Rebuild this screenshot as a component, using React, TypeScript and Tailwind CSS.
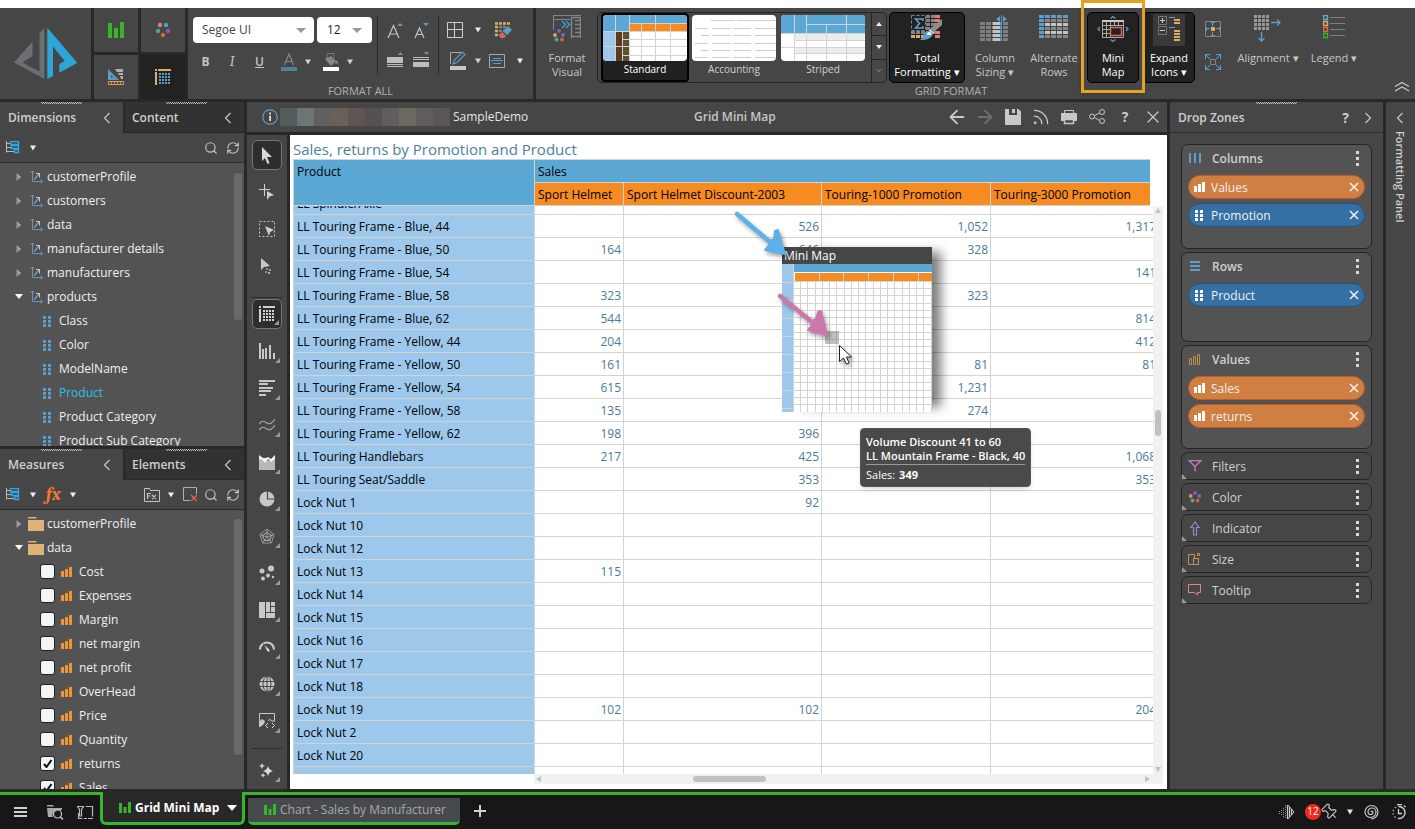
import type { ReactNode } from "react";
import { ArrowLeft, ArrowRight, Pin, RefreshCw, Rss, Search, X } from "lucide-react";

interface IconProps {
  w?: number;
  h?: number;
  children: ReactNode;
}

function Icon({ w = 16, h = 16, children }: IconProps) {
  return (
    <svg width={w} height={h} viewBox={`0 0 ${w} ${h}`} fill="none" className="block shrink-0" aria-hidden="true">
      {children}
    </svg>
  );
}

/* ---------- shared glyphs ---------- */

function Caret({ color = "#d0d0d0" }: { color?: string }) {
  return (
    <Icon w={6} h={6}>
      <path d="M0 0.5h6L3 5.5z" fill={color} />
    </Icon>
  );
}

function ChevronLeft() {
  return (
    <Icon w={8} h={12}>
      <path d="M6.5 1L1.5 6l5 5" stroke="#c8c8c8" strokeWidth="1.2" />
    </Icon>
  );
}

function ChevronRight() {
  return (
    <Icon w={8} h={12}>
      <path d="M1.5 1l5 5-5 5" stroke="#c8c8c8" strokeWidth="1.2" />
    </Icon>
  );
}

function Grip() {
  return (
    <span className="absolute top-0 left-[41px]">
      <Icon w={41} h={2}>
        <path d="M0 0.5h41" stroke="#c4c4c4" strokeDasharray="1 1" />
        <path d="M1 1.5h40" stroke="#c4c4c4" strokeDasharray="1 1" />
      </Icon>
    </span>
  );
}

function BarsIcon({ color }: { color: string }) {
  return (
    <Icon w={11} h={10}>
      <path d="M0 4h3v6H0zM4 2h3v8H4zM8 0h3v10H8z" fill={color} />
    </Icon>
  );
}

function DotsIcon({ color }: { color: string }) {
  return (
    <Icon w={8} h={11}>
      <path d="M0 0h3v3H0zM5 0h3v3H5zM0 4h3v3H0zM5 4h3v3H5zM0 8h3v3H0zM5 8h3v3H5z" fill={color} />
    </Icon>
  );
}

function TreeMenuIcon() {
  return (
    <Icon w={14} h={13}>
      <path d="M0.5 0v11.5M0.5 2.5h4M0.5 6.5h5M0.5 10.5h8" stroke="#b8b8b8" />
      <path d="M4.5 0.5h8v3h-8zM5.5 4.5h7v3h-7zM8.5 8.5h4v3h-4z" stroke="#2fa4e7" strokeWidth="1.4" />
    </Icon>
  );
}

function AxisIcon() {
  return (
    <Icon w={14} h={14}>
      <path d="M2.5 1v10.5h10M0.5 3L2.5 1l2 2M10.5 9.5l2 2-2 2" stroke="#5b9bc8" />
      <path d="M4 9.5L9.5 3.5M6 3.5h3.5v4" stroke="#c8c8c8" />
    </Icon>
  );
}

function GreenChart() {
  return (
    <Icon w={12} h={12}>
      <path d="M0 1h3v10H0zM4.5 5h3v6h-3zM9 0h3v11H9z" fill="#35b729" />
    </Icon>
  );
}

/* ---------- ribbon ---------- */

function Logo() {
  return (
    <Icon w={64} h={53}>
      <path d="M30.3 0.7V52L0 35.6l18.5-21V29L8.5 35.6l17 9V6z" fill="#6d6e71" />
      <path d="M33.3 0.7l30 35-18 10V37l5.500-3L39 19.500V49l-5.700 3z" fill="#2ba6d8" />
    </Icon>
  );
}

function ModeIcons() {
  const cell = "flex items-center justify-center bg-[#464646]";
  return (
    <div className="grid w-[91px] shrink-0 grid-cols-2 grid-rows-2 gap-[3px]">
      <button type="button" aria-label="Discover" className={cell}>
        <Icon>
          <path d="M0 1h4v15H0zM6 6h4v10H6zM12 0h4v16h-4z" fill="#35b729" />
        </Icon>
      </button>
      <button type="button" aria-label="Present" className={cell}>
        <Icon>
          <circle cx="5" cy="3" r="2.2" fill="#e27d6f" />
          <circle cx="11" cy="3" r="2.2" fill="#5b9bc8" />
          <circle cx="3" cy="9" r="2.2" fill="#4fa59a" />
          <circle cx="13" cy="9" r="2.2" fill="#9255b5" />
          <circle cx="8" cy="13" r="2.2" fill="#cf6a2c" />
        </Icon>
      </button>
      <button type="button" aria-label="Illustrate" className={cell}>
        <Icon>
          <path d="M0 0v11h11zM3 6v2.500h2.500z" fill="#5b9bc8" fillRule="evenodd" />
          <path d="M7 0h8v3H9zM10 4h5v2h-4zM12 7h3v3h-2z" fill="#b0b0b0" />
          <path d="M0.500 12.500h15v3H0.500zM3.500 12.500v2M6.500 12.500v2M9.500 12.500v2M12.500 12.500v2" stroke="#d6a256" />
        </Icon>
      </button>
      <button type="button" aria-label="Grid" className="flex items-center justify-center bg-[#222222]">
        <Icon>
          <path d="M0 0h2v2H0zM3 0h13v2H3zM0 3h2v13H0z" fill="#deab6b" />
          <path d="M5 4v12M8 4v12M11 4v12M14 4v12" stroke="#5f9ecb" strokeWidth="2" strokeDasharray="2 1" />
        </Icon>
      </button>
    </div>
  );
}

function FormatAll() {
  return (
    <section className="flex w-[345px] shrink-0 flex-col bg-[#464646] pt-2">
      <div className="flex h-[59px] pl-[5px]">
        <div className="w-[184px]">
          <div className="flex gap-[3px]">
            <div className="relative">
              <select aria-label="Font" className="h-[26px] w-[121px] appearance-none rounded-[4px] bg-white pl-[9px] text-xs text-[#444]">
                <option>Segoe UI</option>
              </select>
              <span className="pointer-events-none absolute top-[12px] right-2">
                <Icon w={10} h={5}>
                  <path d="M0 0h10L5 5z" fill="#999" />
                </Icon>
              </span>
            </div>
            <div className="relative">
              <select aria-label="Font size" className="h-[26px] w-[55px] appearance-none rounded-[4px] bg-white pl-[10px] text-xs text-[#222]">
                <option>12</option>
              </select>
              <span className="pointer-events-none absolute top-[12px] right-[10px]">
                <Icon w={10} h={5}>
                  <path d="M0 0h10L5 5z" fill="#999" />
                </Icon>
              </span>
            </div>
          </div>
          <div className="mt-[9px] flex h-5 items-center text-xs text-[#c4c4c4]">
            <button type="button" className="w-[25px] font-bold">B</button>
            <button type="button" className="w-[28px] font-serif text-sm italic">I</button>
            <button type="button" className="w-[27px] font-semibold underline">U</button>
            <button type="button" aria-label="Font colour" className="flex w-[32px] justify-center">
              <Icon h={18}>
                <path d="M3.500 12L8 1l4.500 11M5 8.500h6" stroke="#858585" strokeWidth="1.200" />
                <path d="M0 14h16v4H0z" fill="#51819b" />
              </Icon>
            </button>
            <button type="button" aria-label="Font colours" className="w-[10px]"><Caret /></button>
            <button type="button" aria-label="Fill" className="flex w-[32px] justify-center">
              <Icon h={18}>
                <path d="M2 6l6-3 5 5-5 5z" fill="#8a8a8a" />
                <path d="M4 5V0.500h7V5M4 4l7 3" stroke="#777" />
                <path d="M13.500 7l1.800 3.500h-3.600z" fill="#5b9bc8" />
                <path d="M0 14h16v4H0z" fill="#fff" />
              </Icon>
            </button>
            <button type="button" aria-label="Fill colours"><Caret /></button>
          </div>
        </div>

        <div className="grid w-[61px] grid-cols-2 grid-rows-2 place-items-center border-l border-[#2b2b2b] px-1">
          <button type="button" aria-label="Larger text">
            <Icon w={16} h={18}>
              <path d="M1 16L6.500 3.500 12 16M3 12h7" stroke="#c4c4c4" strokeWidth="1.200" />
              <path d="M10 4h6l-3-3z" fill="#5b9bc8" />
            </Icon>
          </button>
          <button type="button" aria-label="Smaller text">
            <Icon w={16} h={18}>
              <path d="M2 16L6.500 6 11 16M4 12.500h5" stroke="#c4c4c4" strokeWidth="1.200" />
              <path d="M10 1h6l-3 3z" fill="#5b9bc8" />
            </Icon>
          </button>
          <button type="button" aria-label="Taller rows">
            <Icon w={16} h={18}>
              <path d="M11 4h5l-2.500-3z" fill="#5b9bc8" />
              <path d="M0 6h16v6H0zM0 13h16v1H0zM0 15h16v1H0z" fill="#bdbdbd" />
            </Icon>
          </button>
          <button type="button" aria-label="Shorter rows">
            <Icon w={16} h={18}>
              <path d="M11 1h5l-2.500 3z" fill="#5b9bc8" />
              <path d="M0 6h16v1H0zM0 8h16v1H0zM0 11h16v5H0z" fill="#bdbdbd" />
            </Icon>
          </button>
        </div>

        <div className="border-l border-[#2b2b2b] pl-2">
          <div className="flex h-[27px] items-center">
            <button type="button" aria-label="Borders">
              <Icon w={16} h={16}>
                <path d="M0.500 0.500h15v15H0.500zM7.500 0.500v15M0.500 7.500h15" stroke="#d0d0d0" />
              </Icon>
            </button>
            <button type="button" aria-label="Border styles" className="ml-[12px]"><Caret color="#e8e8e8" /></button>
            <button type="button" aria-label="Clear format" className="ml-[14px]">
              <Icon w={17} h={16}>
                <path d="M0 1.500h16M0 5h4M0 9h4M0 13h4" stroke="#deab6b" strokeWidth="2.400" strokeDasharray="3 1" />
                <path d="M4 5h8M4 9h5M4 13h3" stroke="#808080" strokeWidth="2.400" strokeDasharray="3 1" />
                <path d="M8 9l5-5 4 4-5 5z" fill="#5f9ecb" />
                <path d="M7 10l4 4-2 2H5v-3z" fill="#dc6850" />
              </Icon>
            </button>
          </div>
          <div className="mt-[3px] flex h-[29px] items-center">
            <button type="button" aria-label="Border colour" className="ml-[3px]">
              <Icon w={17} h={20}>
                <path d="M0.500 13V1.500H11" stroke="#a8a8a8" />
                <path d="M3 13l1.500-4 8-8 2.500 2.500-8 8z" stroke="#5b9bc8" strokeWidth="1.200" />
                <path d="M0 15h16v4H0z" fill="#c8c8c8" />
              </Icon>
            </button>
            <button type="button" aria-label="Border colours" className="ml-[8px]"><Caret /></button>
            <button type="button" aria-label="Text wrap" className="ml-[8px]">
              <Icon w={16} h={14}>
                <path d="M0.500 0.500h15v13H0.500z" stroke="#a8a8a8" />
                <path d="M4 4.500h8M2 6.500h12M4 9.500h8" stroke="#5b9bc8" />
              </Icon>
            </button>
            <button type="button" aria-label="Text wrap options" className="ml-[12px]"><Caret color="#f0f0f0" /></button>
          </div>
        </div>
      </div>
      <div className="mt-auto pb-px text-center text-[11px] leading-[14px] text-[#b0b0b0]">FORMAT ALL</div>
    </section>
  );
}

function RibbonButton({ icon, lines, className = "" }: { icon: ReactNode; lines: string[]; className?: string }) {
  return (
    <button type="button" className={`flex h-[71px] flex-col items-center border text-[11px] leading-[14px] whitespace-nowrap ${className}`}>
      <span className="flex h-[38px] items-start justify-center pt-[2px]">{icon}</span>
      {lines.map((line) => (
        <span key={line}>{line}</span>
      ))}
    </button>
  );
}

function StandardThumb() {
  return (
    <Icon w={84} h={46}>
      <rect width="84" height="46" rx="4" fill="#fff" />
      <path d="M4 0h76a4 4 0 0 1 4 4v5H0V4a4 4 0 0 1 4-4zM0 8h26v8H0z" fill="#5ba8d4" />
      <path d="M27 9h57v7H27z" fill="#f68b22" />
      <path d="M0 17h12v29H4a4 4 0 0 1-4-4z" fill="#9dc8ec" />
      <path d="M13 17h6v29h-6z" fill="#5a3a20" />
      <path d="M20 17h6v29h-6z" fill="#5f4f2d" />
      <path d="M12.500 0v46M26.500 0v46M52.500 0v9M0 16.500h84M27 8.500h57M38.500 9v37M52.500 9v37M67.500 9v37M20 24.500h64M0 31.500h84M20 40.500h64M19.500 17v29" stroke="#d3d3d3" />
    </Icon>
  );
}

function AccountingThumb() {
  return (
    <Icon w={84} h={46}>
      <rect width="84" height="46" rx="4" fill="#fff" />
      <path d="M19 5.500h24M45 5.500h39M3 13.500h13M20 13.500h18M41 13.500h18M63 13.500h21M9 20.500h8M20 20.500h18M41 20.500h18M63 20.500h21M3 28.500h13M20 28.500h18M41 28.500h18M63 28.500h21M9 35.500h8M20 35.500h18M41 35.500h18M63 35.500h21M3 42.500h13M20 42.500h18M41 42.500h18M63 42.500h21" stroke="#cfcfcf" />
    </Icon>
  );
}

function StripedThumb() {
  return (
    <Icon w={84} h={46}>
      <rect width="84" height="46" rx="4" fill="#fff" />
      <path d="M4 0h76a4 4 0 0 1 4 4v15H0V4a4 4 0 0 1 4-4z" fill="#5ba8d4" />
      <path d="M13 19h71v7H13zM13 32h71v7H13z" fill="#ececec" />
      <path d="M13.500 0v46M25.500 0v46M25 9.500h59M45.500 10v36M65.500 0v46M0 18.500h84M13 25.500h71M0 32.500h84M13 38.500h71" stroke="#d3d3d3" />
    </Icon>
  );
}

function Gallery() {
  const label = "text-[10px] leading-4 text-[#d0d0d0]";
  return (
    <div className="flex h-[71px] w-[290px] shrink-0 overflow-hidden rounded-[5px] border border-[#242424]">
      <button type="button" className="ml-[3px] flex w-[88px] flex-col items-center rounded-[4px] border-2 border-black bg-[#202020]">
        <StandardThumb />
        <span className="text-[10px] leading-4 text-white">Standard</span>
      </button>
      <button type="button" className="ml-[2px] flex w-[86px] flex-col items-center pt-[2px]">
        <AccountingThumb />
        <span className={label}>Accounting</span>
      </button>
      <button type="button" className="ml-[4px] flex w-[84px] flex-col items-center pt-[2px]">
        <StripedThumb />
        <span className={label}>Striped</span>
      </button>
      <div className="ml-auto flex w-[15px] flex-col divide-y divide-[#242424] border-l border-[#242424]">
        <button type="button" aria-label="Previous styles" className="flex flex-1 items-center justify-center">
          <Icon w={6} h={4}><path d="M0 4h6L3 0z" fill="#f0f0f0" /></Icon>
        </button>
        <button type="button" aria-label="Next styles" className="flex flex-1 items-center justify-center">
          <Icon w={6} h={4}><path d="M0 0h6L3 4z" fill="#f0f0f0" /></Icon>
        </button>
        <button type="button" aria-label="All styles" className="flex flex-1 items-center justify-center">
          <Icon w={6} h={4}><path d="M1 0.500l2 2 2-2" stroke="#999" /></Icon>
        </button>
      </div>
    </div>
  );
}

function FormatVisualIcon() {
  return (
    <Icon w={28} h={28}>
      <path d="M0 0.500h28M0.500 1v14M0 4.500h17" stroke="#858585" />
      <path d="M18.500 3v20M18 21.500h9M27.500 3v20M22 5.500h5M22 9.500h5M22 13.500h5M22 17.500h5M18 2.500h10" stroke="#858585" strokeWidth="1.500" />
      <path d="M9 6l3.500 3.500L9 13M13 6l3.500 3.500L13 13" stroke="#2fa4e7" strokeWidth="1.300" />
      <circle cx="6" cy="16" r="2" fill="#9255b5" />
      <circle cx="2" cy="20" r="2" fill="#d6a256" />
      <circle cx="10" cy="20" r="2" fill="#4b7fc0" />
      <circle cx="3.500" cy="24.500" r="2" fill="#4fa58a" />
      <circle cx="9" cy="24.500" r="2" fill="#d9603f" />
    </Icon>
  );
}

function TotalIcon() {
  return (
    <Icon w={32} h={27}>
      <path d="M0.500 0.500h14v15h-14z" stroke="#858585" strokeDasharray="3 2" />
      <path d="M12 6V4H4.500l4 4.500-4 4.500H12v-2" stroke="#5f9ecb" strokeWidth="1.600" />
      <path d="M15 1.500h9M15 5.500h9M15 9.500h9M15 13.500h9M0 17.500h14M15 17.500h9" stroke="#858585" strokeWidth="3" strokeDasharray="4 1" />
      <path d="M24 1.500h6M24 5.500h6M24 9.500h3M24 17.500h6M24 21.500h6" stroke="#e27d6f" strokeWidth="3" strokeDasharray="5 1" />
      <path d="M0 21.500h13" stroke="#deab6b" strokeWidth="3" strokeDasharray="4 1" />
      <path d="M31 4v6l-8 7-4-3z" fill="#8e8e8e" />
      <path d="M19 14l4 4-2 1-3-3z" fill="#f4f4f4" />
      <path d="M18 16c3 0 5 3 3 5-3 4-8 4-12 4 3-2 3-4 4-6 1-2 3-3 5-3z" fill="#5f9ecb" />
      <path d="M18 17c2 0 3 2 2 3h-4c0-2 1-3 2-3z" fill="#f4f4f4" />
    </Icon>
  );
}

function ColumnSizingIcon() {
  return (
    <Icon w={30} h={27}>
      <path d="M2.500 7v19M8.500 7v19M25.500 7v19" stroke="#808080" strokeWidth="5" strokeDasharray="3 1" />
      <path d="M14.500 7v19M18.500 7v19" stroke="#c4c4c4" strokeWidth="4" strokeDasharray="3 1" />
      <path d="M21.500 0v26" stroke="#2fa4e7" />
      <path d="M20 1v6l-4-3zM23 1v6l4-3z" fill="#5f9ecb" />
    </Icon>
  );
}

function AlternateIcon() {
  return (
    <Icon w={30} h={24}>
      <path d="M0 1.500h30M0 5.500h5M0 9.500h5M0 13.500h5M0 17.500h5M0 21.500h5" stroke="#5f9ecb" strokeWidth="3" strokeDasharray="5 1" />
      <path d="M6 5.500h24M6 13.500h24M6 21.500h24" stroke="#858585" strokeWidth="3" strokeDasharray="5 1" />
      <path d="M6 9.500h24M6 17.500h24" stroke="#c4c4c4" strokeWidth="3" strokeDasharray="5 1" />
    </Icon>
  );
}

function MiniMapIcon() {
  return (
    <Icon w={32} h={28}>
      <path d="M13.500 3.500L16 1.500l2.500 2M13.500 24.500l2.500 2 2.500-2M3 12L1 14l2 2M29 12l2 2-2 2" stroke="#5f9ecb" strokeWidth="1.300" />
      <path d="M5.500 6v16.500h21V6M9.500 6v16M13.500 6v16M5 10.500h21M5 14.500h8M5 18.500h8M17.500 6v4M21.500 6v4" stroke="#a8a8a8" />
      <path d="M5 6h22" stroke="#c8c8c8" strokeWidth="2" />
      <path d="M13.500 12.500h11v8h-11z" stroke="#dc6850" strokeWidth="1.500" fill="#222" />
    </Icon>
  );
}

function ExpandIcon() {
  return (
    <span className="-mt-px flex size-8 items-start justify-center bg-[#393939] pt-px">
      <Icon w={24} h={27}>
        <path d="M1.500 1.500h8v8h-8zM1.500 11.500h8v8h-8z" stroke="#777" />
        <path d="M3 5.500h5M5.500 3v5M3 15.500h5" stroke="#c8c8c8" />
        <path d="M12 2.500h6M12 12.500h6" stroke="#5f9ecb" />
        <path d="M17 5h6M17 8h6M17 16h6M17 19h6M17 22h6M17 25h6" stroke="#deab6b" strokeWidth="2" />
      </Icon>
    </span>
  );
}

function AlignmentIcon() {
  return (
    <Icon w={28} h={27}>
      <path d="M1.500 0v15M5.500 0v15M9.500 0v15M13.500 0v15" stroke="#999" strokeWidth="3" strokeDasharray="3 1" />
      <path d="M17 7.500h9M23 4.500l3 3-3 3M7.500 17v9M4.500 23l3 3 3-3" stroke="#5f9ecb" strokeWidth="1.300" />
    </Icon>
  );
}

function LegendIcon() {
  return (
    <Icon w={22} h={24}>
      <path d="M0.500 0.500h4v4h-4z" stroke="#62a8da" strokeWidth="1.400" />
      <path d="M0.500 6.500h4v4h-4z" stroke="#deab6b" strokeWidth="1.400" />
      <path d="M0.500 12.500h4v4h-4z" stroke="#dc6850" strokeWidth="1.400" />
      <path d="M0.500 18.500h4v4h-4z" stroke="#35b729" strokeWidth="1.400" />
      <path d="M7 2.500h15M7 8.500h15M7 14.500h15M7 20.500h15" stroke="#808080" />
    </Icon>
  );
}

const PRESSED = "rounded-[5px] border-black bg-[#222] text-white";

function GridFormat() {
  return (
    <section className="relative flex-1 bg-[#464646] text-[#c8c8c8]">
      <div className="flex h-full w-[830px] flex-col pt-[4px]">
        <div className="flex">
          <RibbonButton className="ml-px w-[60px] border-transparent" icon={<FormatVisualIcon />} lines={["Format", "Visual"]} />
          <Gallery />
          <RibbonButton className={`ml-[2px] w-[76px] ${PRESSED}`} icon={<TotalIcon />} lines={["Total", "Formatting ▾"]} />
          <RibbonButton className="w-[60px] border-transparent" icon={<ColumnSizingIcon />} lines={["Column", "Sizing ▾"]} />
          <RibbonButton className="w-[58px] border-transparent" icon={<AlternateIcon />} lines={["Alternate", "Rows"]} />
          <div className="relative ml-1">
            <RibbonButton className={`w-[52px] ${PRESSED}`} icon={<MiniMapIcon />} lines={["Mini", "Map"]} />
            <div className="pointer-events-none absolute -top-[12px] -left-[6px] h-[93px] w-[64px] border-3 border-[#e2a323] shadow-md" />
          </div>
          <RibbonButton className={`ml-1 w-[52px] ${PRESSED}`} icon={<ExpandIcon />} lines={["Expand", "Icons ▾"]} />
          <div className="flex w-[36px] flex-col items-center gap-[17px] pt-[9px]">
            <button type="button" aria-label="Fit cells">
              <Icon>
                <path d="M0.500 0.500h15v15H0.500z" stroke="#858585" />
                <path d="M7.500 1v4M7.500 11v4M1 7.500h4M11 7.500h4M6 1.500h4M6 14.500h4M1.500 6v4M14.500 6v4" stroke="#5f9ecb" />
                <path d="M6 6h4v4H6z" fill="#deab6b" />
              </Icon>
            </button>
            <button type="button" aria-label="Fit page">
              <Icon>
                <path d="M5.500 5.500h5v5h-5z" stroke="#858585" />
                <path d="M5 5L0.500 0.500M11 5l4.500-4.500M5 11L0.500 15.500M11 11l4.500 4.500M0.500 5V0.500H5M11 0.500h4.500V5M0.500 11v4.500H5M11 15.500h4.500V11" stroke="#5f9ecb" />
              </Icon>
            </button>
          </div>
          <RibbonButton className="w-[74px] border-transparent" icon={<AlignmentIcon />} lines={["Alignment ▾"]} />
          <RibbonButton className="w-[58px] border-transparent" icon={<LegendIcon />} lines={["Legend ▾"]} />
        </div>
        <div className="mt-auto pb-px text-center text-[11px] leading-[14px] text-[#b0b0b0]">GRID FORMAT</div>
      </div>
      <button type="button" aria-label="Collapse ribbon" className="absolute right-[5px] bottom-[7px]">
        <Icon w={16} h={11}>
          <path d="M1 5.500l7-4 7 4M1 10l7-4 7 4" stroke="#c8c8c8" strokeWidth="1.300" />
        </Icon>
      </button>
    </section>
  );
}

/* ---------- left panels ---------- */

function PanelTabs({ active, other }: { active: string; other: string }) {
  return (
    <div className="flex h-[31px] shrink-0 text-xs font-semibold text-[#cfcfcf]">
      <button type="button" className="relative flex w-[123px] items-center justify-between bg-[#464646] pr-[12px] pl-2">
        <Grip />
        {active}
        <ChevronLeft />
      </button>
      <button type="button" className="relative mb-px ml-[2px] flex flex-1 items-center justify-between bg-[#323232] pt-px pr-[12px] pl-[7px]">
        <Grip />
        {other}
        <ChevronLeft />
      </button>
    </div>
  );
}

const TABLES = ["customerProfile", "customers", "data", "manufacturer details", "manufacturers", "products"];
const PRODUCT_COLUMNS = ["Class", "Color", "ModelName", "Product", "Product Category", "Product Sub Category"];

const MEASURES = [
  { name: "Cost", checked: false },
  { name: "Expenses", checked: false },
  { name: "Margin", checked: false },
  { name: "net margin", checked: false },
  { name: "net profit", checked: false },
  { name: "OverHead", checked: false },
  { name: "Price", checked: false },
  { name: "Quantity", checked: false },
  { name: "returns", checked: true },
  { name: "Sales", checked: true },
];

function Twisty({ open }: { open: boolean }) {
  return (
    <Icon w={8} h={9}>
      {open ? <path d="M0 1h8L4 6z" fill="#fff" /> : <path d="M1.500 0v8l5-4z" fill="#9a9a9a" />}
    </Icon>
  );
}

function FolderIcon() {
  return (
    <Icon w={16} h={14}>
      <path d="M0 0h8l1 1.500H0zM0 3h16v11H0z" fill="#e0b277" />
    </Icon>
  );
}

function SearchRefresh() {
  return (
    <>
      <button type="button" aria-label="Search" className="ml-[7px]"><Search size={14} strokeWidth={2} /></button>
      <button type="button" aria-label="Refresh" className="ml-[8px]"><RefreshCw size={14} strokeWidth={2} /></button>
    </>
  );
}

function DimensionsPanel() {
  return (
    <section className="flex h-[344px] flex-col">
      <PanelTabs active="Dimensions" other="Content" />
      <div className="flex h-[30px] shrink-0 items-center border-b border-[#2b2b2b] bg-[#464646] pr-1 pl-[6px] text-[#c4c4c4]">
        <TreeMenuIcon />
        <span className="mr-auto ml-[10px]"><Caret color="#f0f0f0" /></span>
        <SearchRefresh />
      </div>
      <div className="relative flex-1 overflow-hidden bg-[#535353] pt-[2px] text-xs text-[#f0f0f0]">
        <ul>
          {TABLES.map((name) => (
            <li key={name} className="flex h-6 items-center pl-[15px]">
              <Twisty open={name === "products"} />
              <span className="mr-[3px] ml-[7px]"><AxisIcon /></span>
              {name}
            </li>
          ))}
          {PRODUCT_COLUMNS.map((name) => (
            <li key={name} className="flex h-6 items-center gap-2 pl-[43px]">
              <DotsIcon color="#5b9bc8" />
              <span className={name === "Product" ? "text-[#2fc0e8]" : ""}>{name}</span>
            </li>
          ))}
        </ul>
        <div className="absolute top-[10px] right-[2px] h-[147px] w-2 rounded-[3px] bg-[#696969]" />
      </div>
    </section>
  );
}

function MeasuresPanel() {
  return (
    <section className="flex min-h-0 flex-1 flex-col">
      <PanelTabs active="Measures" other="Elements" />
      <div className="flex h-[30px] shrink-0 items-center border-b border-[#2b2b2b] bg-[#464646] pr-1 pl-[6px] text-[#c4c4c4]">
        <TreeMenuIcon />
        <span className="ml-[10px]"><Caret color="#f0f0f0" /></span>
        <button type="button" className="ml-[10px] font-serif text-lg leading-5 font-bold text-[#ef7a32] italic">fx</button>
        <span className="mr-auto ml-[9px]"><Caret color="#f0f0f0" /></span>
        <Icon w={16} h={14}>
          <path d="M0.500 13.500V0.500h5l1 2h9v11z" stroke="#c4c4c4" />
          <path d="M3.500 11V5.500h3.500M3.500 8h3M8 7l4 4M12 7l-4 4" stroke="#c4c4c4" strokeWidth="1.200" />
        </Icon>
        <span className="ml-[8px]"><Caret color="#f0f0f0" /></span>
        <button type="button" aria-label="Remove" className="ml-[9px]">
          <Icon w={14} h={15}>
            <path d="M7 13.500H0.500V0.500h13V7" stroke="#b0b0b0" />
            <path d="M8 8l6 6M14 8l-6 6" stroke="#dc6850" strokeWidth="1.400" />
          </Icon>
        </button>
        <SearchRefresh />
      </div>
      <div className="relative min-h-0 flex-1 overflow-hidden bg-[#535353] pt-[2px] text-xs text-[#f0f0f0]">
        <div className="flex h-6 items-center pl-[15px]">
          <Twisty open={false} />
          <span className="mr-[3px] ml-[5px]"><FolderIcon /></span>
          customerProfile
        </div>
        <div className="flex h-6 items-center pl-[15px]">
          <Twisty open />
          <span className="mr-[3px] ml-[5px]"><FolderIcon /></span>
          data
        </div>
        {MEASURES.map((measure) => (
          <label key={measure.name} className="flex h-6 items-center pl-[40px]">
            <span className="relative mb-[2px]">
              <input
                type="checkbox"
                defaultChecked={measure.checked}
                className="peer block size-[15px] appearance-none rounded-[3px] border border-[#222] bg-[#f4f4f4]"
              />
              <span className="pointer-events-none absolute top-[3px] left-[3px] hidden peer-checked:block">
                <Icon w={10} h={9}>
                  <path d="M1 5l2.500 3L8.500 1" stroke="#111" strokeWidth="2" />
                </Icon>
              </span>
            </span>
            <span className="mr-[7px] ml-[6px]"><BarsIcon color="#f0962e" /></span>
            {measure.name}
          </label>
        ))}
        <div className="absolute top-[9px] right-[2px] h-[236px] w-2 rounded-[3px] bg-[#696969]" />
      </div>
    </section>
  );
}

/* ---------- centre ---------- */

const BLOCKS = [
  "bg-[#555a5d]",
  "bg-[#6a7776]",
  "bg-[#62605f]",
  "bg-[#6a6058]",
  "bg-[#625452]",
  "bg-[#555150]",
  "bg-[#615d5c]",
  "bg-[#6c6a5e]",
  "bg-[#625c5d]",
  "bg-[#5a5654]",
];

function TitleBar() {
  const btn = "flex w-7 items-center justify-center";
  return (
    <div className="flex h-[30px] shrink-0 items-center bg-[#464646] text-xs text-[#c8c8c8]">
      <div className="flex w-[447px] items-center pl-[15px]">
        <Icon w={16} h={16}>
          <circle cx="8" cy="8" r="7.200" stroke="#5f9ecb" strokeWidth="1.200" />
          <path d="M7.200 3.500h1.800v2H7.200zM7.200 6.800h1.800V12H7.200z" fill="#e0e0e0" />
        </Icon>
        <div className="ml-[2px] flex">
          {BLOCKS.map((block, i) => (
            <span key={i} className={`h-[18px] w-[17px] ${block}`} />
          ))}
        </div>
        <span className="ml-[3px] text-[#e4e4e4]">SampleDemo</span>
      </div>
      <h1 className="font-semibold">Grid Mini Map</h1>
      <div className="ml-auto flex h-full">
        <button type="button" aria-label="Undo" className={btn}><ArrowLeft size={22} strokeWidth={2} /></button>
        <button type="button" aria-label="Redo" className={`${btn} text-[#707070]`}><ArrowRight size={22} strokeWidth={2} /></button>
        <button type="button" aria-label="Save" className={btn}>
          <Icon>
            <path d="M0 0h4v6h8V0h1.500L16 2.500V16H0z" fill="#c8c8c8" />
            <path d="M7 0h3v4H7z" fill="#c8c8c8" />
          </Icon>
        </button>
        <button type="button" aria-label="Feed" className={btn}><Rss size={20} strokeWidth={1.500} /></button>
        <button type="button" aria-label="Print" className={btn}>
          <Icon>
            <path d="M3.500 4V1.500h9V4" stroke="#c8c8c8" />
            <path d="M0 4h16v8h-3v-2H3v2H0z" fill="#c8c8c8" />
            <path d="M3.500 10.500h9v4h-9z" stroke="#c8c8c8" strokeWidth="1.500" />
          </Icon>
        </button>
        <button type="button" aria-label="Share" className={btn}>
          <Icon>
            <path d="M5.500 6.500l5-2.500M5.500 8.500l5 3" stroke="#c8c8c8" />
            <circle cx="3" cy="7.500" r="2.500" stroke="#c8c8c8" />
            <circle cx="13" cy="3" r="2.500" stroke="#c8c8c8" />
            <circle cx="13" cy="12" r="2.500" stroke="#c8c8c8" />
          </Icon>
        </button>
        <button type="button" className={`${btn} text-sm font-bold`}>?</button>
        <button type="button" aria-label="Close" className={btn}><X size={20} strokeWidth={1.500} /></button>
      </div>
    </div>
  );
}

const CHART_TOOLS: { name: string; art: ReactNode }[] = [
  { name: "Columns", art: <path d="M1 0v16M4 6v10M7 5v11M11 2v14M15 10v6" stroke="#c8c8c8" strokeWidth="2" /> },
  { name: "Bars", art: <path d="M0 1h16M0 4h9M0 8h14M0 11h12M0 15h7" stroke="#c8c8c8" strokeWidth="2" /> },
  { name: "Lines", art: <path d="M0 7c3-4 5-3 8-1s5 0 8-4M0 13c3-4 5-3 8-1s5 0 8-4" stroke="#a8a8a8" strokeWidth="1.200" /> },
  {
    name: "Area",
    art: (
      <>
        <path d="M0 4l3 2 2 2 3-3 2 2 3-1 3-3v13H0z" fill="#b8b8b8" />
        <path d="M0 1l4 3 3 0 2-1 3 2 4-4v4l-4 3-3-3-3 4-3-3-3-1z" fill="#f4f4f4" />
      </>
    ),
  },
  {
    name: "Pie",
    art: (
      <>
        <circle cx="8" cy="8" r="7.500" fill="#c8c8c8" />
        <path d="M8.500 0v8H16" stroke="#464646" strokeWidth="1.200" />
      </>
    ),
  },
  {
    name: "Radar",
    art: (
      <>
        <path d="M8 1l7 5.500L12.500 15h-9L1 6.500zM8 1v8M15 6.500L8 9M12.500 15L8 9M3.500 15L8 9M1 6.500L8 9" stroke="#9a9a9a" />
        <path d="M8 4.500l4.500 3-2 5h-5l-2-5z" stroke="#b8b8b8" />
      </>
    ),
  },
  {
    name: "Scatter",
    art: (
      <g fill="#c8c8c8">
        <circle cx="12" cy="3.500" r="3" />
        <circle cx="3" cy="6" r="2.500" />
        <circle cx="9" cy="10.500" r="2" />
        <circle cx="4" cy="13.500" r="2" />
        <circle cx="14" cy="12" r="1.200" />
      </g>
    ),
  },
  { name: "Treemap", art: <path d="M0 0h6v16H0zM7 0h4v10H7zM12 0h4v4h-4zM12 5h4v5h-4zM7 11h9v5H7z" fill="#c8c8c8" /> },
  {
    name: "Gauge",
    art: (
      <>
        <path d="M1 10.500A7 7 0 0 1 15 10.500" stroke="#c8c8c8" strokeWidth="2.200" />
        <path d="M4.500 4.500l6.500 6.500c0 2-1.500 2.500-3 1.500z" fill="#e0e0e0" stroke="#464646" strokeWidth="0.800" />
      </>
    ),
  },
  {
    name: "Map",
    art: (
      <>
        <circle cx="8" cy="8" r="7.500" fill="#c8c8c8" />
        <path d="M0 5.500h16M0 10.500h16M8 0v16" stroke="#464646" />
        <ellipse cx="8" cy="8" rx="4" ry="7.500" stroke="#464646" />
      </>
    ),
  },
  {
    name: "Custom visual",
    art: (
      <>
        <path d="M0.500 14V0.500h15V8M9 7.500l2-1 2 1.500h3" stroke="#c8c8c8" />
        <path d="M0 9l3-3 3 2-1 3-4 3H0z" fill="#c8c8c8" />
        <path d="M9 10l-2.500 2.500L9 15M13 10l2.500 2.500L13 15" stroke="#d8d8d8" />
      </>
    ),
  },
];

function Corner() {
  return (
    <span className="absolute right-[2px] bottom-[3px]">
      <Icon w={5} h={5}><path d="M5 0v5H0z" fill="#9a9a9a" /></Icon>
    </span>
  );
}

function ToolStrip() {
  const tool = "relative flex size-[30px] items-center justify-center";
  const selected = "relative flex size-[30px] items-center justify-center rounded-[5px] border border-[#777] bg-[#2e2e2e]";
  return (
    <nav className="flex w-10 shrink-0 flex-col items-center gap-[7px] bg-[#464646] pt-[5px]">
      <button type="button" aria-label="Select" className={selected}>
        <Icon w={12} h={17}><path d="M1 0v14l3-3 2.500 6 2-1L6 10h5z" fill="#d8d8d8" /></Icon>
      </button>
      <button type="button" aria-label="Point select" className={tool}>
        <Icon><path d="M5.500 0v12M0 5.500h11" stroke="#d0d0d0" /><path d="M8 7v9l2.500-3.500L15 11z" fill="#d0d0d0" /></Icon>
      </button>
      <button type="button" aria-label="Lasso" className={tool}>
        <Icon><path d="M0.500 0.500h15v15H0.500z" stroke="#c8c8c8" strokeDasharray="2 2" /><path d="M6 5l9 4-4 2-1 4z" fill="#d0d0d0" /></Icon>
      </button>
      <button type="button" aria-label="Colour select" className={tool}>
        <Icon>
          <path d="M2 0v12l3-3 6-1z" fill="#c8c8c8" />
          <path d="M7 10h2v2H7z" fill="#dc6850" />
          <path d="M10 11h2v2h-2z" fill="#5fb0e8" />
          <path d="M6 13h2v2H6z" fill="#35b79a" />
          <path d="M9 14h2v2H9z" fill="#deab6b" />
        </Icon>
      </button>
      <hr className="my-0 mt-[9px] -mb-[6px] w-[30px] border-[#2b2b2b]" />
      <button type="button" aria-label="Grid visual" className={selected}>
        <Icon>
          <path d="M0 1h2M4 1h12M1 3v13" stroke="#d0d0d0" strokeWidth="2" />
          <path d="M5 4v12M8 4v12M11 4v12M14 4v12" stroke="#d0d0d0" strokeWidth="2" strokeDasharray="2 1" />
        </Icon>
        <Corner />
      </button>
      {CHART_TOOLS.map((item) => (
        <button key={item.name} type="button" aria-label={item.name} className={tool}>
          <Icon>{item.art}</Icon>
          <Corner />
        </button>
      ))}
      <hr className="mt-[5px] -mb-px w-[30px] border-[#2b2b2b]" />
      <button type="button" aria-label="Assistant" className={tool}>
        <Icon>
          <path d="M9 4c1 3 2 4 5 5-3 1-4 2-5 5-1-3-2-4-5-5 3-1 4-2 5-5z" fill="#d8d8d8" />
          <path d="M3 1l1 2 2 1-2 1-1 2-1-2-2-1 2-1zM4 11l1 1.500 1.500 1L5 14l-1 1.500L3 14l-1.500-.5L3 12.500z" fill="#c8c8c8" />
        </Icon>
        <Corner />
      </button>
    </nav>
  );
}

type Row = [string, string, string, string, string];

const ROWS: Row[] = [
  ["LL Spindle/Axle", "", "", "", ""],
  ["LL Touring Frame - Blue, 44", "", "526", "1,052", "1,317"],
  ["LL Touring Frame - Blue, 50", "164", "646", "328", ""],
  ["LL Touring Frame - Blue, 54", "", "", "", "141"],
  ["LL Touring Frame - Blue, 58", "323", "", "323", ""],
  ["LL Touring Frame - Blue, 62", "544", "", "", "814"],
  ["LL Touring Frame - Yellow, 44", "204", "", "", "412"],
  ["LL Touring Frame - Yellow, 50", "161", "", "81", "81"],
  ["LL Touring Frame - Yellow, 54", "615", "", "1,231", ""],
  ["LL Touring Frame - Yellow, 58", "135", "", "274", ""],
  ["LL Touring Frame - Yellow, 62", "198", "396", "770", ""],
  ["LL Touring Handlebars", "217", "425", "217", "1,068"],
  ["LL Touring Seat/Saddle", "", "353", "", "353"],
  ["Lock Nut 1", "", "92", "", ""],
  ["Lock Nut 10", "", "", "", ""],
  ["Lock Nut 12", "", "", "", ""],
  ["Lock Nut 13", "115", "", "", ""],
  ["Lock Nut 14", "", "", "", ""],
  ["Lock Nut 15", "", "", "", ""],
  ["Lock Nut 16", "", "", "", ""],
  ["Lock Nut 17", "", "", "", ""],
  ["Lock Nut 18", "", "", "", ""],
  ["Lock Nut 19", "102", "102", "", "204"],
  ["Lock Nut 2", "", "", "", ""],
  ["Lock Nut 20", "", "", "", ""],
  ["", "", "", "", ""],
];

const PROMOTIONS = ["Sport Helmet", "Sport Helmet Discount-2003", "Touring-1000 Promotion", "Touring-3000 Promotion"];

function Columns() {
  return (
    <colgroup>
      <col className="w-[242px]" />
      <col className="w-[89px]" />
      <col className="w-[198px]" />
      <col className="w-[169px]" />
      <col className="w-[168px]" />
    </colgroup>
  );
}

function PivotGrid() {
  const table = "w-[866px] table-fixed border-separate border-spacing-0 whitespace-nowrap";
  const head = "h-[23px] border-b border-[#d3d3d3] p-0 pt-[2px] pl-[3px] text-left font-normal";
  return (
    <div className="flex min-h-0 flex-1 flex-col pl-[3px] text-xs leading-5 text-black">
      <div className="mr-[17px] shrink-0 overflow-hidden border-t border-[#d3d3d3]">
        <table className={table}>
          <Columns />
          <thead>
            <tr>
              <th rowSpan={2} className={`${head} border-x bg-[#5ba8d4] align-top`}>Product</th>
              <th colSpan={4} className={`${head} bg-[#5ba8d4]`}>Sales</th>
            </tr>
            <tr>
              {PROMOTIONS.map((name) => (
                <th key={name} className={`${head} border-r bg-[#f68b22]`}>{name}</th>
              ))}
            </tr>
          </thead>
        </table>
      </div>
      <div className="flex min-h-0 flex-1">
        <div className="min-w-0 flex-1 overflow-hidden">
          <table className={`-mt-[14px] ${table}`}>
            <Columns />
            <tbody>
              {ROWS.map(([product, ...values]) => (
                <tr key={product}>
                  <th scope="row" className={`${head} border-x bg-[#9dc8ec]`}>{product}</th>
                  {values.map((value, i) => (
                    <td key={i} className="h-[23px] border-r border-b border-[#d3d3d3] bg-white p-0 pt-[2px] pr-[2px] text-right text-[#4a7a99]">
                      {value}
                    </td>
                  ))}
                </tr>
              ))}
            </tbody>
          </table>
        </div>
        <div className="mr-1 flex w-[10px] flex-col items-center bg-[#f1f1f1] py-[2px]">
          <Icon w={6} h={5}><path d="M0 5h6L3 0z" fill="#c1c1c1" /></Icon>
          <div className="mt-[197px] mb-auto h-[26px] w-[6px] rounded-[3px] bg-[#c1c1c1]" />
          <Icon w={6} h={5}><path d="M0 0h6L3 5z" fill="#c1c1c1" /></Icon>
        </div>
      </div>
      <div className="mr-1 mb-[5px] ml-[241px] flex h-[10px] shrink-0 items-center justify-between bg-[#f1f1f1] pr-[13px] pl-[2px]">
        <Icon w={5} h={6}><path d="M5 0v6L0 3z" fill="#c1c1c1" /></Icon>
        <div className="mr-[227px] h-[6px] w-[73px] rounded-[3px] bg-[#c1c1c1]" />
        <Icon w={5} h={6}><path d="M0 0v6l5-3z" fill="#c1c1c1" /></Icon>
      </div>
    </div>
  );
}

const MAP_LINES = Array.from({ length: 19 }, (_, i) => Math.round(18 + i * 7.25) + 0.5);
const MAP_ORANGE = [13, 38, 62, 87, 112, 137];

function MiniMap() {
  return (
    <div className="absolute top-[112px] left-[492px] w-[150px] bg-white shadow-[14px_0_10px_-5px_rgba(0,0,0,0.5)]">
      <div className="h-[17px] bg-[#464646] pl-[2px] text-xs leading-[17px] text-white">Mini Map</div>
      <Icon w={150} h={148}>
        <path d="M0 0h12v148H0z" fill="#9dc8ec" />
        <path d="M12 0h138v8H12z" fill="#5ba8d4" />
        {MAP_ORANGE.map((x) => (
          <path key={x} d={`M${x} 9h24v8h-24z`} fill="#f68b22" />
        ))}
        {MAP_ORANGE.slice(1).map((x) => (
          <path key={x} d={`M${x - 0.5} 9v8`} stroke="#d3d3d3" />
        ))}
        {[18, 36, 54, 72, 90, 108, 126, 144].map((y) => (
          <path key={y} d={`M0 ${y + 0.5}h12`} stroke="#d3d3d3" />
        ))}
        {MAP_LINES.map((n) => (
          <path key={n} d={`M${n} 18v130`} stroke="#d3d3d3" />
        ))}
        {MAP_LINES.slice(0, 17).map((n) => (
          <path key={n} d={`M12 ${n + 6}h138`} stroke="#d3d3d3" />
        ))}
        <path d="M11.500 0v148M12 17.500h138" stroke="#d3d3d3" />
        <path d="M43 67h14v13H43z" fill="#808080" fillOpacity="0.5" />
      </Icon>
    </div>
  );
}

function Pointers() {
  return (
    <div className="pointer-events-none absolute top-[75px] left-[440px] drop-shadow-[2px_3px_2px_rgba(0,0,0,0.35)]">
      <Icon w={130} h={160}>
        <path d="M7 4L40 32" stroke="#5fb0e8" strokeWidth="4.500" strokeLinecap="round" />
        <path d="M55 44l-20-4 5-6-1-3 5-2 1-8 3-1z" fill="#5fb0e8" stroke="#5fb0e8" strokeWidth="2" strokeLinejoin="round" />
        <path d="M50 86L82 112" stroke="#cc78aa" strokeWidth="4.500" strokeLinecap="round" />
        <path d="M97 125l-19-5 5-6-1-3 4-2 2-7 3-1z" fill="#cc78aa" stroke="#cc78aa" strokeWidth="2" strokeLinejoin="round" />
        <path d="M109.500 135.500v16l4-3.500 3 6 2.500-1-2.500-6h5z" fill="#fff" stroke="#222" />
      </Icon>
    </div>
  );
}

function GridTooltip() {
  return (
    <div role="tooltip" className="absolute top-[293px] left-[570px] w-max rounded-[4px] border border-[#555] bg-[#404040]/95 px-[5px] pt-[6px] pb-1 text-[11px] leading-[14px] whitespace-nowrap text-white shadow-md">
      <div className="font-semibold">Volume Discount 41 to 60</div>
      <div className="font-semibold">LL Mountain Frame - Black, 40</div>
      <div className="mt-px border-t border-[#999] pt-[3px]">
        Sales: <span className="ml-px font-bold">349</span>
      </div>
    </div>
  );
}

function Center() {
  return (
    <main className="flex min-w-0 flex-1 flex-col gap-[3px]">
      <TitleBar />
      <div className="flex min-h-0 flex-1 gap-[3px]">
        <ToolStrip />
        <div className="relative flex min-w-0 flex-1 flex-col overflow-hidden bg-white">
          <h2 className="h-6 shrink-0 pt-1 pl-[3px] text-[15px] leading-5 text-[#4a7f9e]">Sales, returns by Promotion and Product</h2>
          <PivotGrid />
          <MiniMap />
          <Pointers />
          <GridTooltip />
        </div>
      </div>
    </main>
  );
}

/* ---------- right panels ---------- */

interface Chip {
  label: string;
  kind: "measure" | "attribute";
}

function ChipRow({ label, kind }: Chip) {
  const tone = kind === "measure" ? "border-[#c0582a] bg-[#d07f42]" : "border-[#23527c] bg-[#356fa3]";
  return (
    <div className={`flex h-6 items-center rounded-full border px-1 text-xs text-[#f0f0f0] ${tone}`}>
      <span className="flex w-[12px] justify-center">
        {kind === "measure" ? <BarsIcon color="#fff" /> : <DotsIcon color="#fff" />}
      </span>
      <span className="ml-[6px] pt-px">{label}</span>
      <button type="button" aria-label={`Remove ${label}`} className="ml-auto">
        <Icon w={12} h={12}><path d="M2 2l8 8M10 2l-8 8" stroke="#f4f4f4" strokeWidth="1.500" /></Icon>
      </button>
    </div>
  );
}

function ZoneHead({ icon, label, bold = false }: { icon: ReactNode; label: string; bold?: boolean }) {
  return (
    <div className="flex h-[26px] items-center pr-3 pl-[6px] text-xs text-[#d0d0d0]">
      <span className="flex w-[14px] justify-center">{icon}</span>
      <span className={bold ? "ml-[10px] pt-[2px] font-semibold" : "ml-[10px] pt-[2px]"}>{label}</span>
      <button type="button" aria-label={`${label} menu`} className="ml-auto">
        <Icon w={3} h={15}><path d="M0 0h3v3H0zM0 6h3v3H0zM0 12h3v3H0z" fill="#d8d8d8" /></Icon>
      </button>
    </div>
  );
}

const ZONES: { label: string; height: string; icon: ReactNode; chips: Chip[] }[] = [
  {
    label: "Columns",
    height: "h-[105px]",
    icon: <Icon w={12} h={10}><path d="M1 0v10M6 0v10M11 0v10" stroke="#5f9ecb" strokeWidth="2" /></Icon>,
    chips: [{ label: "Values", kind: "measure" }, { label: "Promotion", kind: "attribute" }],
  },
  {
    label: "Rows",
    height: "h-[90px]",
    icon: <Icon w={10} h={10}><path d="M0 1h10M0 5h10M0 9h10" stroke="#5f9ecb" strokeWidth="2" /></Icon>,
    chips: [{ label: "Product", kind: "attribute" }],
  },
  {
    label: "Values",
    height: "h-[104px]",
    icon: <Icon w={12} h={11}><path d="M0.500 4.500h2v6h-2zM4.500 2.500h2v8h-2zM8.500 0.500h2v10h-2z" stroke="#b98a52" /></Icon>,
    chips: [{ label: "Sales", kind: "measure" }, { label: "returns", kind: "measure" }],
  },
];

const SMALL_ZONES: { label: string; icon: ReactNode }[] = [
  {
    label: "Filters",
    icon: <Icon w={14} h={12}><path d="M1 0.500h12L7 6.500zM7 6v5.500" stroke="#c578c4" strokeWidth="1.400" /></Icon>,
  },
  {
    label: "Color",
    icon: (
      <Icon w={14} h={12}>
        <circle cx="7" cy="2" r="1.900" fill="#9255b5" />
        <circle cx="2.700" cy="5" r="1.900" fill="#e09050" />
        <circle cx="11.300" cy="5" r="1.900" fill="#4b7fc0" />
        <circle cx="4.500" cy="9.500" r="1.900" fill="#5fa58f" />
        <circle cx="9.700" cy="9.500" r="1.900" fill="#d9603f" />
      </Icon>
    ),
  },
  {
    label: "Indicator",
    icon: <Icon w={12} h={15}><path d="M6 1L2 6.500h2.500v7.500h3V6.500H10z" stroke="#8f8bd0" strokeWidth="1.200" /></Icon>,
  },
  {
    label: "Size",
    icon: <Icon w={14} h={12}><path d="M6.500 5.500V1.500h-6v10h5M5.500 5.500h5v6h-5zM9.500 0.500h2v2h-2z" stroke="#c89350" /></Icon>,
  },
  {
    label: "Tooltip",
    icon: <Icon w={14} h={12}><path d="M0.500 0.500h12v8h-3v2.500l-3-2.500h-6z" stroke="#e08585" /></Icon>,
  },
];

function DropZones() {
  return (
    <aside className="flex w-[213px] shrink-0 flex-col bg-[#464646]">
      <div className="relative flex h-[31px] shrink-0 items-center border-b border-[#2b2b2b] pt-px pr-[11px] pl-2 text-xs font-semibold text-[#cfcfcf]">
        <span className="absolute top-0 left-[45px]"><Grip /></span>
        Drop Zones
        <button type="button" className="mr-[15px] ml-auto text-sm font-bold">?</button>
        <button type="button" aria-label="Collapse"><ChevronRight /></button>
      </div>
      <div className="flex flex-col gap-[3px] px-[11px] pt-[11px]">
        {ZONES.map((zone) => (
          <div key={zone.label} className={`rounded-[7px] border border-[#242424] bg-[#535353] ${zone.height}`}>
            <ZoneHead icon={zone.icon} label={zone.label} bold />
            <div className="mt-1 flex flex-col gap-1 px-[6px]">
              {zone.chips.map((chip) => (
                <ChipRow key={chip.label} {...chip} />
              ))}
            </div>
          </div>
        ))}
        {SMALL_ZONES.map((zone) => (
          <div key={zone.label} className="relative h-7 rounded-[7px] border border-[#242424]">
            <ZoneHead icon={zone.icon} label={zone.label} />
            <span className="absolute bottom-0 left-0">
              <Icon w={5} h={5}><path d="M0 0v5h5z" fill="#9a9a9a" /></Icon>
            </span>
          </div>
        ))}
      </div>
    </aside>
  );
}

function FormattingRail() {
  return (
    <aside className="flex w-[29px] shrink-0 flex-col items-center bg-[#464646] pt-[10px] pr-[2px]">
      <ChevronLeft />
      <div className="mt-[7px] text-[11px] leading-4 font-semibold text-[#cfcfcf] [writing-mode:vertical-rl]">Formatting Panel</div>
    </aside>
  );
}

/* ---------- footer ---------- */

function Footer() {
  return (
    <footer className="mt-[3px] flex h-[37px] shrink-0 bg-[#171717] text-xs">
      <div className="flex w-[100px] items-center border-t-3 border-[#35b729] pl-[14px]">
        <button type="button" aria-label="Menu">
          <Icon w={13} h={10}><path d="M0 1h13M0 5h13M0 9h13" stroke="#d0d0d0" strokeWidth="2" /></Icon>
        </button>
        <button type="button" aria-label="Find content" className="ml-[20px]">
          <Icon w={17} h={16}>
            <path d="M0 1h6l1 1.500H0zM0 4h15v2H9a5 5 0 0 0-3 7H1z" fill="#a8a8a8" />
            <circle cx="10.500" cy="10" r="4" stroke="#c8c8c8" strokeWidth="1.200" />
            <path d="M13.500 13l2.500 2.500" stroke="#c8c8c8" strokeWidth="1.500" />
          </Icon>
        </button>
        <button type="button" aria-label="Present layout" className="ml-[13px]">
          <Icon w={17} h={15}>
            <path d="M0.500 1.500h6L4.500 4.500v6.500h-2V4.500zM9 1.500h6.500v10M1.500 8v5.500h4M7 13.500h3M11 13.500h5" stroke="#b8b8b8" strokeWidth="1.200" />
          </Icon>
        </button>
      </div>
      <button type="button" className="flex h-[33px] w-[145px] items-center rounded-b-[6px] border-x-3 border-b-3 border-[#35b729] bg-[#282828] pt-[2px] pl-4 font-bold text-white">
        <GreenChart />
        <span className="ml-1 whitespace-nowrap">Grid Mini Map</span>
        <span className="ml-2">
          <Icon w={10} h={6}><path d="M0 0h10L5 6z" fill="#fff" /></Icon>
        </span>
      </button>
      <div className="flex flex-1 items-start border-t-3 border-[#35b729]">
        <button type="button" className="mt-[3px] ml-[3px] flex h-[27px] w-[212px] items-center rounded-b-[5px] border-b-3 border-[#35b729] bg-[#474a4c] pl-4 text-[#a8a8a8]">
          <GreenChart />
          <span className="ml-1">Chart - Sales by Manufacturer</span>
        </button>
        <button type="button" aria-label="Add tab" className="mt-[10px] ml-[14px]">
          <Icon w={12} h={12}><path d="M6 0v12M0 6h12" stroke="#d0d0d0" strokeWidth="2" /></Icon>
        </button>
        <div className="mr-[8px] ml-auto flex h-[34px] items-center text-[#c8c8c8]">
          <Icon w={16} h={16}>
            <path d="M6.500 1v14M4.500 4v10M2.500 6v6M0.500 7v3" stroke="#999" strokeDasharray="1 1" />
            <path d="M8.500 1v14M10.500 3v10M12.500 5v6" stroke="#c8c8c8" strokeWidth="1.200" />
            <path d="M9 1l6 7-6 7" stroke="#c8c8c8" />
          </Icon>
          <span className="ml-[10px] flex size-4 items-center justify-center rounded-full bg-[#f22a1e] text-[10px] text-white">12</span>
          <Pin size={18} strokeWidth={1.500} className="-rotate-45" />
          <span className="ml-2"><Caret color="#e8e8e8" /></span>
          <span className="ml-[10px]">
            <Icon>
              <path d="M8 8a1 1 0 0 1 2 0a2.500 2.500 0 0 1-5 0a4 4 0 0 1 8 0a5.500 5.500 0 0 1-11 0a6.500 6.500 0 0 1 13 0a7 7 0 0 1-7 7" stroke="#c8c8c8" strokeWidth="1.200" />
            </Icon>
          </span>
          <span className="ml-[12px]">
            <Icon>
              <path d="M8 2.500a6 6 0 0 1 0 12" stroke="#d0d0d0" strokeWidth="1.400" />
              <path d="M8 14.500a6 6 0 0 1 0-12" stroke="#a8a8a8" strokeWidth="1.400" strokeDasharray="1.500 2" />
              <path d="M6 0.700h5M7.500 5v4.500H11M13 1.500l1.500 1.500" stroke="#d0d0d0" strokeWidth="1.300" />
            </Icon>
          </span>
        </div>
      </div>
    </footer>
  );
}

export default function App() {
  return (
    <div className="flex h-screen flex-col overflow-hidden bg-[#282828] font-['Open_Sans',sans-serif]">
      <div className="h-2 shrink-0 bg-white" />
      <header className="flex h-[91px] shrink-0 gap-[3px]">
        <div className="flex w-[91px] shrink-0 items-center justify-center bg-[#464646]">
          <Logo />
        </div>
        <ModeIcons />
        <FormatAll />
        <GridFormat />
      </header>
      <div className="mt-[3px] flex min-h-0 flex-1 gap-[3px]">
        <div className="flex w-[244px] shrink-0 flex-col gap-[3px]">
          <DimensionsPanel />
          <MeasuresPanel />
        </div>
        <Center />
        <DropZones />
        <FormattingRail />
      </div>
      <Footer />
    </div>
  );
}
